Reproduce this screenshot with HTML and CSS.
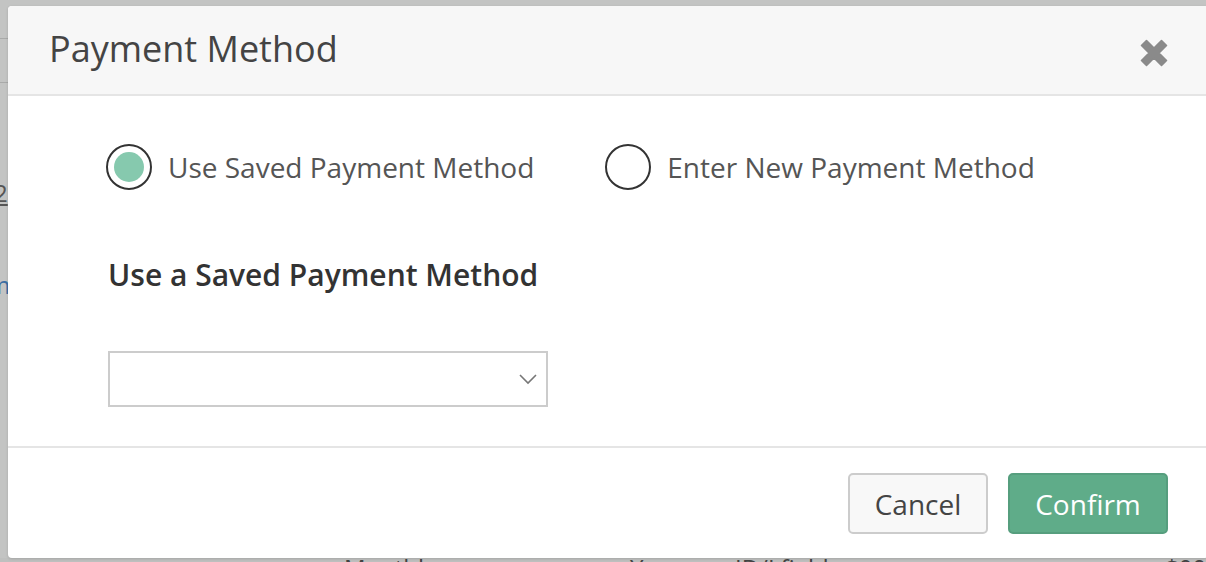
FILE: index.html
```html
<!DOCTYPE html>
<html>
<head>
<meta charset="utf-8">
<link rel="stylesheet" href="styles.css">
</head>
<body>
<div class="page">
  <div class="bg-line bg-line-1"></div>
  <div class="bg-line bg-line-2"></div>
  <span class="bg-text bg-num">2</span>
  <span class="bg-text bg-link">m</span>
  <div class="bg-bottom">
    <span class="bg-cell">Monthly</span>
    <span class="bg-cell bg-cell-2">Y</span>
    <span class="bg-cell bg-cell-3">ID/Lfield</span>
    <span class="bg-cell bg-cell-4">$00</span>
  </div>
</div>
<div class="modal">
  <div class="modal-header">
    <h1 class="modal-title">Payment Method</h1>
    <button class="close" aria-label="Close">
      <svg width="28" height="28" viewBox="0 0 28 28"><path d="M1.5 6.5 L6.5 1.5 L14 9 L21.5 1.5 L26.5 6.5 L19 14 L26.5 21.5 L21.5 26.5 L14 19 L6.5 26.5 L1.5 21.5 L9 14 Z" fill="#8a8a8a" stroke="#8a8a8a" stroke-width="1.6" stroke-linejoin="round"/></svg>
    </button>
  </div>
  <div class="modal-body">
    <div class="radio-row">
      <label class="radio-option">
        <span class="radio checked"><span class="dot"></span></span>
        <span class="radio-label">Use Saved Payment Method</span>
      </label>
      <label class="radio-option">
        <span class="radio"></span>
        <span class="radio-label">Enter New Payment Method</span>
      </label>
    </div>
    <h2 class="section-title">Use a Saved Payment Method</h2>
    <div class="select">
      <svg class="chevron" width="18" height="11" viewBox="0 0 18 11"><path d="M1 1 L9 9 L17 1" fill="none" stroke="#777" stroke-width="1.6"/></svg>
    </div>
  </div>
  <div class="modal-footer">
    <button class="btn btn-default">Cancel</button>
    <button class="btn btn-primary">Confirm</button>
  </div>
</div>
</body>
</html>
```
FILE: styles.css
```css
html, body {
  margin: 0;
  padding: 0;
  width: 1206px;
  height: 562px;
  overflow: hidden;
}
body {
  background: #c3c4c3;
  font-family: "Open Sans", "Liberation Sans", sans-serif;
  position: relative;
}
.page {
  position: absolute;
  inset: 0;
}
.bg-line {
  position: absolute;
  left: 0;
  width: 8px;
  height: 1px;
  background: #a9aaa9;
}
.bg-line-1 { top: 38px; }
.bg-line-2 { top: 82px; }
.bg-text {
  position: absolute;
  font-size: 24px;
  line-height: 1;
}
.bg-num {
  left: -6px;
  top: 181px;
  color: #555;
  text-decoration: underline;
}
.bg-link {
  left: -12px;
  top: 273px;
  color: #3d6fa3;
}
.bg-bottom {
  position: absolute;
  left: 0;
  right: 0;
  top: 558px;
  height: 4px;
  overflow: hidden;
  background: #bfc0bf;
}
.bg-cell {
  position: absolute;
  top: -2px;
  font-size: 24px;
  line-height: 1;
  color: #444;
}
.bg-cell { left: 344px; }
.bg-cell-2 { left: 630px; }
.bg-cell-3 { left: 735px; }
.bg-cell-4 { left: 1165px; }

.modal {
  position: absolute;
  left: 8px;
  top: 6px;
  width: 1200px;
  height: 552px;
  background: #fff;
  border-radius: 4px;
  display: flex;
  flex-direction: column;
  overflow: hidden;
  box-shadow: 0 1px 3px rgba(0,0,0,0.15);
}
.modal-header {
  height: 88px;
  background: #f7f7f7;
  border-bottom: 2px solid #e5e5e5;
  display: flex;
  align-items: center;
  justify-content: space-between;
  padding: 0 41px 0 41px;
  flex-shrink: 0;
}
.modal-title {
  margin: 0;
  font-size: 36px;
  font-weight: 400;
  color: #444;
  line-height: 1;
  position: relative;
  top: -1px;
}
.close {
  border: 0;
  background: none;
  padding: 0;
  width: 28px;
  height: 28px;
  display: flex;
  position: relative;
  top: 3px;
  left: 1px;
  cursor: pointer;
}
.modal-body {
  height: 350px;
  padding: 0 100px;
  display: flex;
  flex-direction: column;
  flex-shrink: 0;
}
.radio-row {
  display: flex;
  align-items: center;
  margin-top: 48px;
  height: 46px;
}
.radio-option {
  display: flex;
  align-items: center;
  gap: 16px;
}
.radio-option + .radio-option {
  margin-left: 73px;
}
.radio {
  width: 46px;
  height: 46px;
  box-sizing: border-box;
  border: 2px solid #333;
  border-radius: 50%;
  display: flex;
  align-items: center;
  justify-content: center;
  background: #fff;
  margin-left: -2px;
}
.dot {
  width: 30px;
  height: 30px;
  border-radius: 50%;
  background: #86c9ae;
}
.radio-label {
  font-size: 28px;
  color: #555;
  line-height: 1;
}
.section-title {
  margin: 0;
  margin-top: 70px;
  font-size: 30px;
  font-weight: 600;
  color: #333;
  line-height: 1;
}
.select {
  margin-top: 61px;
  width: 440px;
  height: 56px;
  box-sizing: border-box;
  border: 2px solid #ccc;
  background: #fff;
  position: relative;
}
.chevron {
  position: absolute;
  right: 9px;
  top: 21px;
}
.modal-footer {
  border-top: 2px solid #e5e5e5;
  flex: 1;
  display: flex;
  justify-content: flex-end;
  align-items: flex-start;
  gap: 20px;
  padding: 25px 40px 0 0;
}
.btn {
  height: 61px;
  box-sizing: border-box;
  border-radius: 5px;
  font-family: "Open Sans", "Liberation Sans", sans-serif;
  font-size: 28px;
  padding: 0;
  cursor: pointer;
}
.btn-default {
  width: 140px;
  background: #f8f8f8;
  border: 2px solid #ccc;
  color: #444;
}
.btn-primary {
  width: 160px;
  background: #5fac89;
  border: 2px solid #569e7e;
  color: #fff;
}
```
